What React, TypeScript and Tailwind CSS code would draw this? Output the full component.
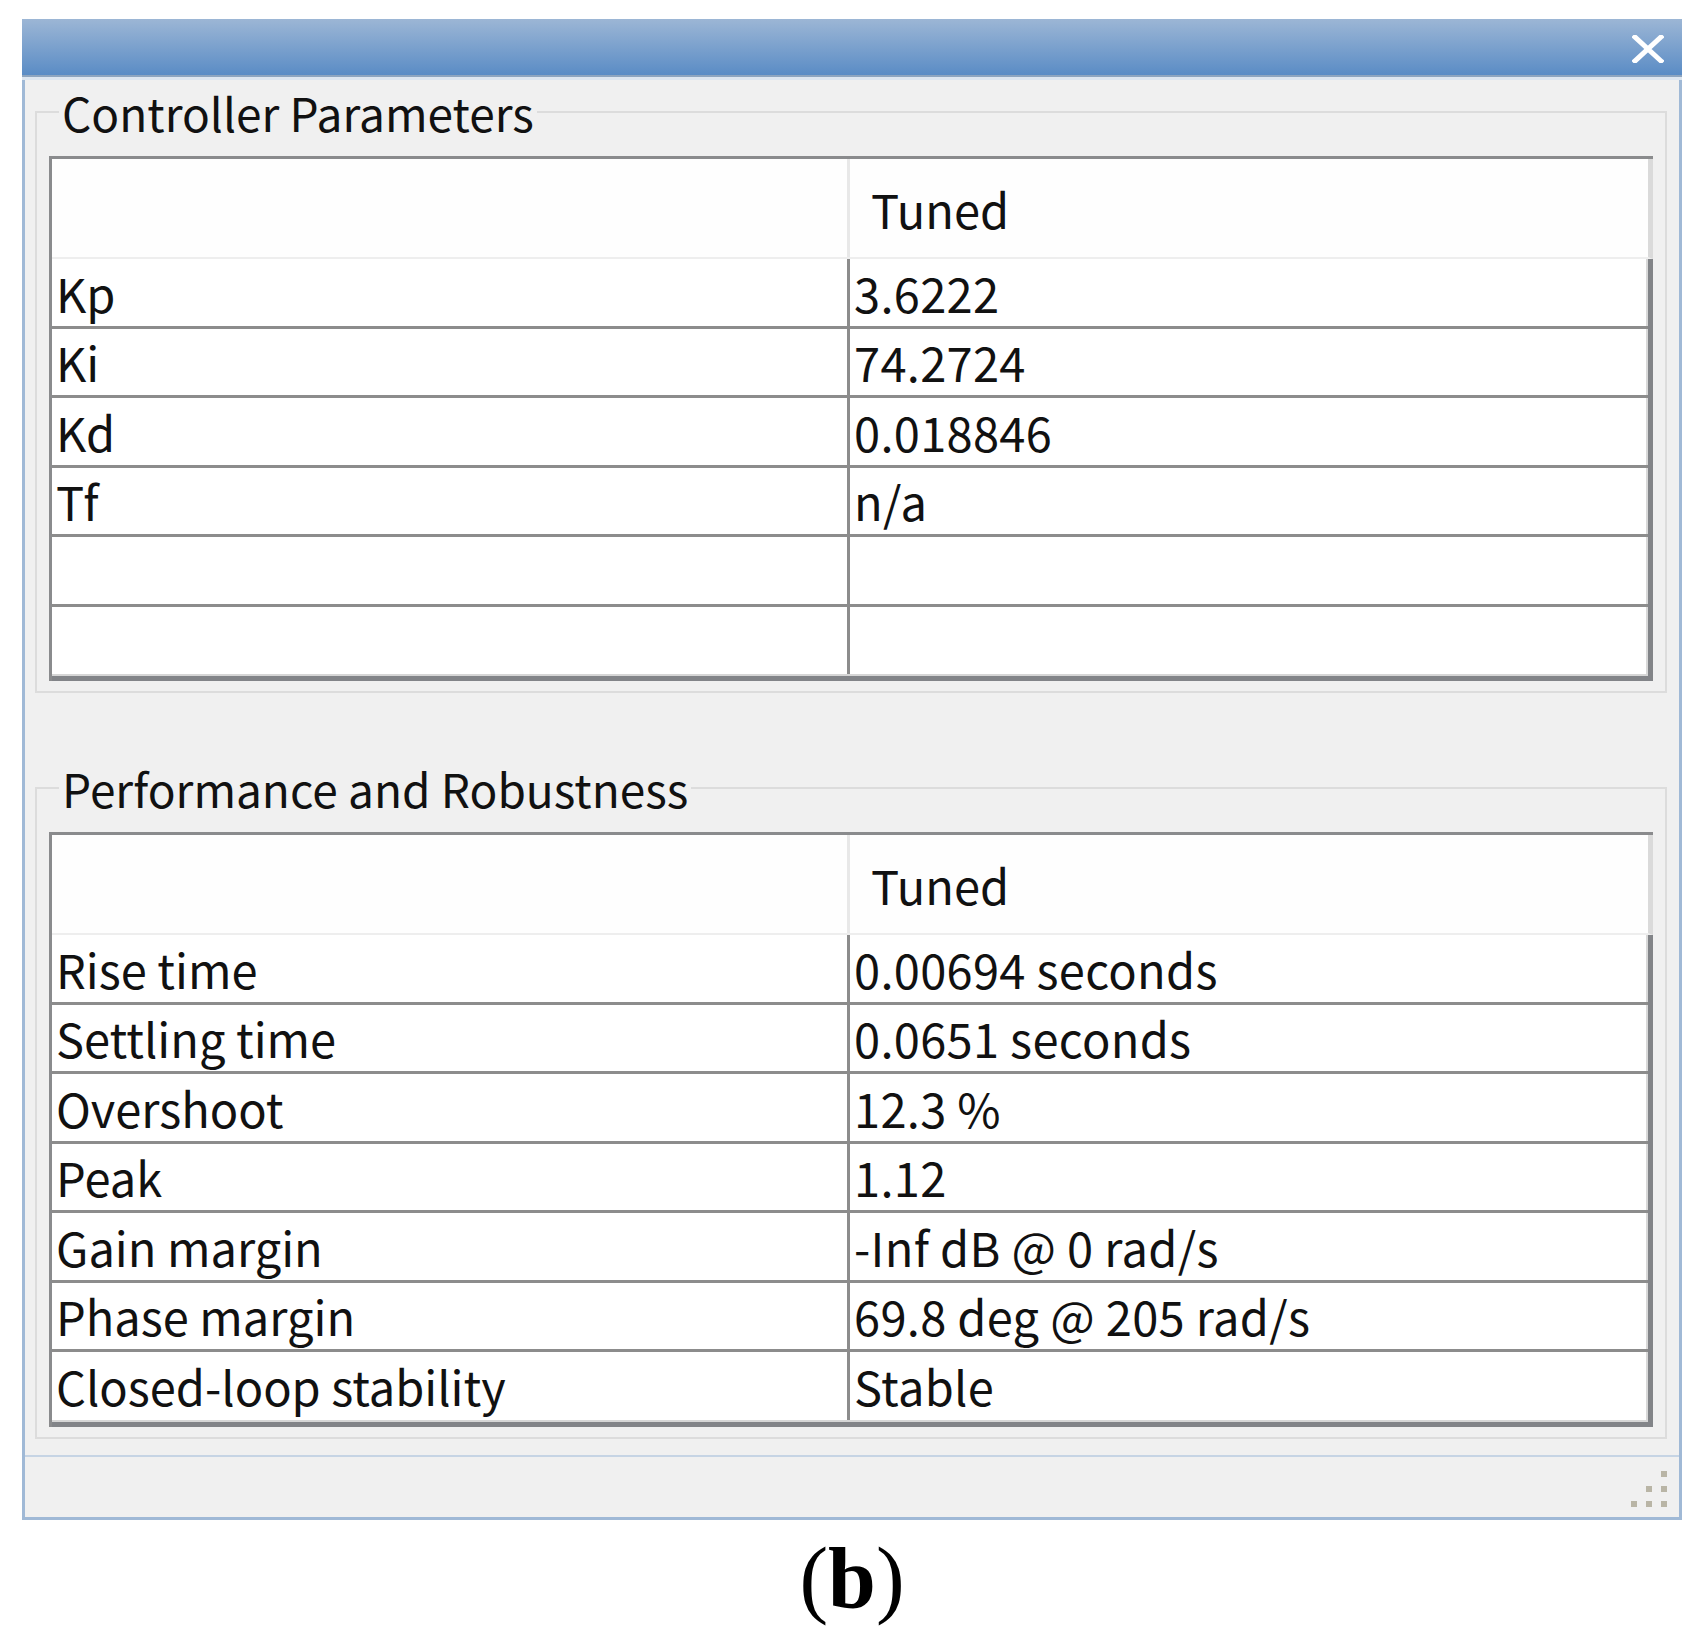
import React from "react";

const font = "font-['Noto_Sans_CJK_TC',sans-serif]";

type Row = [string, string];

function Table({ rows }: { rows: Row[] }) {
  return (
    <div className="border-t-[3px] border-l-[3px] border-[#8a8b8d] bg-white">
      <div className="flex h-[100px] border-b-2 border-r-[5px] border-b-[#eeeeee] border-r-[#dadada] bg-[#fefefe]">
        <div className="w-[798px] border-r-[3px] border-[#e8e8e8]" />
        <div className="flex flex-1 items-center pl-[21px] text-[47px] leading-none text-[#111]">Tuned</div>
      </div>
      <div className="border-r-[5px] border-b-[5px] border-[#828488]">
        {rows.map(([k, v], i) => (
          <div
            key={i}
            className={
              "flex h-[69.5px] " +
              (i === rows.length - 1 ? "border-b-2 border-[#d6d6d6]" : "border-b-[3px] border-[#8c8c8c]")
            }
          >
            <div className="flex w-[798px] items-center border-r-[3px] border-[#8c8c8c] pl-[4px] text-[47px] leading-none text-[#111]">
              {k}
            </div>
            <div className="flex flex-1 items-center border-r-2 border-[#d8d8d8] pl-[4px] text-[47px] tracking-[0.3px] leading-none text-[#111]">
              {v}
            </div>
          </div>
        ))}
      </div>
    </div>
  );
}

function Group({ title, children }: { title: string; children: React.ReactNode }) {
  return (
    <fieldset className="ml-[10px] mr-[12px] border-2 border-[#dcdcdc] px-[12px] pb-[10px]">
      <legend className="ml-[10px] px-[3px] text-[46px] leading-[40px] text-[#111]">{title}</legend>
      <div className="mt-[24px]">{children}</div>
    </fieldset>
  );
}

export default function App() {
  const params: Row[] = [
    ["Kp", "3.6222"],
    ["Ki", "74.2724"],
    ["Kd", "0.018846"],
    ["Tf", "n/a"],
    ["", ""],
    ["", ""],
  ];
  const perf: Row[] = [
    ["Rise time", "0.00694 seconds"],
    ["Settling time", "0.0651 seconds"],
    ["Overshoot", "12.3 %"],
    ["Peak", "1.12"],
    ["Gain margin", "-Inf dB @ 0 rad/s"],
    ["Phase margin", "69.8 deg @ 205 rad/s"],
    ["Closed-loop stability", "Stable"],
  ];
  return (
    <div className={"min-h-screen bg-white pt-[19px] pl-[22px] " + font}>
      <div className="flex w-[1660px] flex-col">
        <div className="flex h-[56px] items-center justify-end bg-gradient-to-b from-[#9cb6d5] to-[#5a8cc5] pr-[18px] pt-[4px]">
          <svg width="32" height="28" viewBox="0 0 32 28">
            <path d="M3 2 L29 26 M29 2 L3 26" stroke="#ffffff" strokeWidth="5" strokeLinecap="square" />
          </svg>
        </div>
        <div className="h-[2px] bg-[#8ea5bf]" />
        <div className="h-[3px] bg-[#dde6f0]" />
        <div className="flex flex-col border-x-[3px] border-b-[3px] border-[#a0b9d6] bg-[#f0f0f0]">
          <div className="pt-[12px]">
            <Group title="Controller Parameters">
              <Table rows={params} />
            </Group>
          </div>
          <div className="pt-[75px]">
            <Group title="Performance and Robustness">
              <Table rows={perf} />
            </Group>
          </div>
          <div className="mt-[16px] h-[2px] bg-[#c6d4e4]" />
          <div className="flex h-[60px] items-end justify-end pb-[8px] pr-[10px]">
            <svg width="38" height="38" viewBox="0 0 38 38">
              <rect x="30" y="0" width="6" height="6" fill="#b9b5a6" />
              <rect x="15" y="15" width="6" height="6" fill="#b9b5a6" />
              <rect x="30" y="15" width="6" height="6" fill="#b9b5a6" />
              <rect x="0" y="30" width="6" height="6" fill="#b9b5a6" />
              <rect x="15" y="30" width="6" height="6" fill="#b9b5a6" />
              <rect x="30" y="30" width="6" height="6" fill="#b9b5a6" />
            </svg>
          </div>
        </div>
        <div className="mt-[15px] text-center font-['Liberation_Serif',serif] text-[86px] leading-none text-black">
          (<span className="font-bold">b</span>)
        </div>
      </div>
    </div>
  );
}
